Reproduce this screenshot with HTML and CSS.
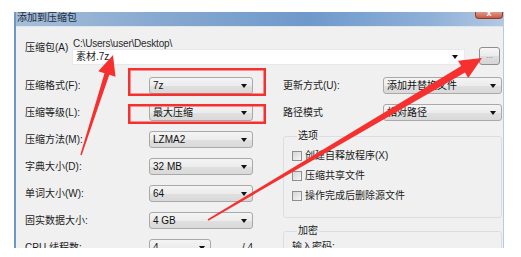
FILE: index.html
```html
<!DOCTYPE html>
<html lang="zh-CN">
<head>
    <meta charset="UTF-8">
    <title>添加到压缩包</title>
    <link rel="stylesheet" href="styles.css">
</head>
<body>
    <div class="window">
        <div class="titlebar">
            <span class="title">添加到压缩包</span>
            <span class="close">x</span>
        </div>

        <div class="dialog">
            <!-- 压缩包路径 -->
            <div class="archive">
                <span class="archive-label">压缩包(A)</span>
                <div class="archive-field">
                    <div class="path">C:\Users\user\Desktop\</div>
                    <div class="combo"><span>素材.7z</span><span class="arrow"></span></div>
                </div>
                <button class="browse">...</button>
            </div>

            <div class="main">
                <!-- 左侧参数 -->
                <div class="settings">
                    <span class="label">压缩格式(F):</span>
                    <div class="select"><span>7z</span><span class="arrow"></span></div>

                    <span class="label">压缩等级(L):</span>
                    <div class="select"><span>最大压缩</span><span class="arrow"></span></div>

                    <span class="label">压缩方法(M):</span>
                    <div class="select"><span>LZMA2</span><span class="arrow"></span></div>

                    <span class="label">字典大小(D):</span>
                    <div class="select"><span>32 MB</span><span class="arrow"></span></div>

                    <span class="label">单词大小(W):</span>
                    <div class="select"><span>64</span><span class="arrow"></span></div>

                    <span class="label">固实数据大小:</span>
                    <div class="select"><span>4 GB</span><span class="arrow"></span></div>

                    <span class="label">CPU 线程数:</span>
                    <div class="threads">
                        <div class="select small"><span>4</span><span class="arrow"></span></div>
                        <span class="total">/ 4</span>
                    </div>
                </div>

                <!-- 右侧参数 -->
                <div class="side">
                    <div class="settings side-rows">
                        <span class="label">更新方式(U):</span>
                        <div class="select"><span>添加并替换文件</span><span class="arrow"></span></div>

                        <span class="label">路径模式</span>
                        <div class="select"><span>相对路径</span><span class="arrow"></span></div>
                    </div>

                    <fieldset class="group options">
                        <legend>选项</legend>
                        <div class="check"><span class="box"></span>创建自释放程序(X)</div>
                        <div class="check"><span class="box"></span>压缩共享文件</div>
                        <div class="check"><span class="box"></span>操作完成后删除源文件</div>
                    </fieldset>

                    <fieldset class="group">
                        <legend>加密</legend>
                        <div class="field-label">输入密码:</div>
                    </fieldset>
                </div>
            </div>
        </div>
    </div>

    <!-- 标注：红框和箭头 -->
    <svg class="marks" width="521" height="257" viewBox="0 0 521 257">
        <rect x="129.25" y="69.25" width="135.5" height="25.5" fill="none" stroke="#f5302f" stroke-width="2.5"/>
        <rect x="129.25" y="105.25" width="135.5" height="17.5" fill="none" stroke="#f5302f" stroke-width="2.5"/>
        <polygon fill="#f5302f" points="81.7,155.2 109.3,74.8 115.5,76.7 113,55 98.3,71.3 104.5,73.2 80.3,154.8"/>
        <polygon fill="#f5302f" points="208.4,220.7 465.0,72.5 468.2,77.9 482,58 458.0,60.7 461.2,66.1 207.6,219.3"/>
    </svg>
</body>
</html>
```

FILE: styles.css
```css
* {
    margin: 0;
    padding: 0;
    box-sizing: border-box;
}

body {
    width: 521px;
    height: 257px;
    overflow: hidden;
    background: #fff;
    font-family: "Liberation Sans", "Noto Sans CJK SC", sans-serif;
    font-size: 10px;
    color: #1b1b1b;
    position: relative;
    padding-top: 12px;
}

/* 窗口 */
.window {
    margin-left: 14px;
    width: 490px;
    height: 236px;
    overflow: hidden;
    border-left: 2px solid #7197c4;
    border-right: 1px solid #b8cadf;
    display: flex;
    flex-direction: column;
}

.titlebar {
    height: 14px;
    flex-shrink: 0;
    display: flex;
    align-items: flex-start;
    background: linear-gradient(to right, #a7bed9, #86a8d0 30%, #6f99cb 60%, #8eb0d8 85%, #b3c8e2);
}

.title {
    font-size: 10px;
    line-height: 9px;
    color: #1e2a3a;
    padding-left: 1px;
    font-family: "Noto Sans CJK SC", sans-serif;
}

.close {
    margin-left: auto;
    width: 28px;
    height: 7px;
    border: 1px solid #8b3a2e;
    border-top: none;
    border-radius: 0 0 4px 4px;
    background: linear-gradient(#e09a88, #c85a45);
    color: #fff;
    font-size: 9px;
    line-height: 2px;
    text-align: center;
    font-weight: bold;
}

.dialog {
    flex: 1;
    min-height: 0;
    background: #f0f0f0;
    border-top: 1px solid #dde5ee;
    padding: 12px 0 0 9px;
}

/* 压缩包路径 */
.archive {
    display: flex;
    align-items: flex-start;
}

.archive-label {
    width: 47px;
    margin-top: 3px;
    line-height: 12px;
    white-space: nowrap;
}

.archive-field {
    width: 393px;
}

.path {
    height: 10px;
    line-height: 10px;
    font-size: 10px;
    letter-spacing: -0.2px;
    padding-left: 1px;
    color: #2a2a2a;
}

.combo {
    height: 16px;
    background: #fff;
    border: 1px solid #e8e8e8;
    display: flex;
    align-items: center;
    justify-content: space-between;
    padding: 0 6px 0 3px;
    line-height: 12px;
}

.arrow {
    width: 0;
    height: 0;
    border-left: 3.5px solid transparent;
    border-right: 3.5px solid transparent;
    border-top: 4px solid #111;
}

.browse {
    margin: 8px 0 0 14px;
    width: 21px;
    height: 18px;
    border: 1px solid #8e8e8e;
    border-radius: 3px;
    background: linear-gradient(#f6f6f6, #ebebeb 50%, #dedede 51%, #d6d6d6);
    font-family: "Liberation Sans", sans-serif;
    font-size: 8px;
    color: #777;
    line-height: 14px;
}

/* 参数区 */
.main {
    display: flex;
    margin-top: 12px;
}

.settings {
    display: grid;
    grid-template-columns: 124px 104px;
    grid-auto-rows: 17px;
    row-gap: 10px;
    align-items: center;
}

.label {
    line-height: 12px;
    white-space: nowrap;
}

.select {
    height: 17px;
    border: 1px solid #a9a9a9;
    border-radius: 3px;
    background: linear-gradient(#f4f4f4, #ececec 50%, #e0e0e0 51%, #d9d9d9);
    display: flex;
    align-items: center;
    justify-content: space-between;
    padding: 0 5px 0 3px;
    line-height: 12px;
    color: #111;
    white-space: nowrap;
}

.threads {
    display: flex;
    align-items: center;
}

.select.small {
    width: 63px;
}

.total {
    margin-left: 31px;
    line-height: 12px;
    white-space: nowrap;
}

.side {
    margin-left: 30px;
    width: 219px;
}

.side-rows {
    grid-template-columns: 100px 119px;
}

/* 分组框 */
.group {
    border: 1px solid #d9dee4;
    border-radius: 3px;
    padding: 4px 0 11px 8px;
    margin-top: 7px;
}

.group.options {
    margin-top: 9px;
}

.group legend {
    margin-left: 5px;
    padding: 0 1px;
    line-height: 12px;
}

.check {
    height: 20px;
    display: flex;
    align-items: center;
    line-height: 12px;
}

.box {
    width: 10px;
    height: 10px;
    border: 1px solid #8f8f8f;
    background: linear-gradient(135deg, #d6d6d6, #f6f6f6);
    margin-right: 3px;
}

.field-label {
    line-height: 12px;
}

/* 标注 */
.marks {
    position: absolute;
    top: 0;
    left: 0;
    pointer-events: none;
}
```
